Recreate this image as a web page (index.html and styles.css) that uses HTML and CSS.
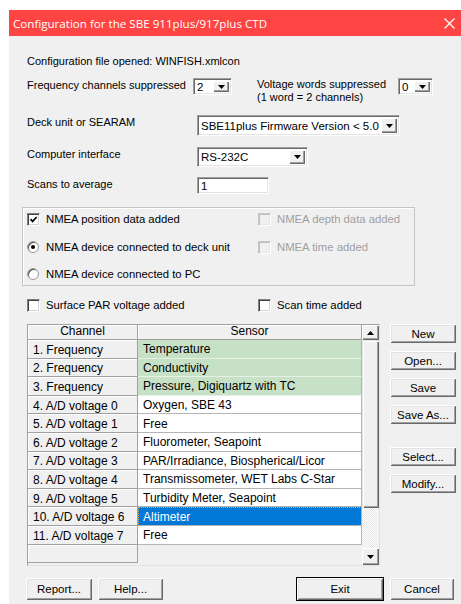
FILE: index.html
```html
<!DOCTYPE html>
<html>
<head>
<meta charset="utf-8">
<title>Configuration</title>
<link rel="stylesheet" href="styles.css">
</head>
<body>
<div class="window">
  <div class="titlebar">
    <span class="title">Configuration for the SBE 911plus/917plus CTD</span>
    <svg class="close" width="11" height="11" viewBox="0 0 11 11"><path d="M0.5 0.5 L10.5 10.5 M10.5 0.5 L0.5 10.5" stroke="#fff" stroke-width="1.2" fill="none"/></svg>
  </div>

  <div class="content">
    <div class="r-file">Configuration file opened: WINFISH.xmlcon</div>

    <div class="r-freq">
      <span class="lbl w-freq">Frequency channels suppressed</span>
      <div class="combo c-freq"><span class="val">2</span><span class="drop"><svg width="7" height="4" viewBox="0 0 7 4"><path d="M0 0 H7 L3.5 4 Z" fill="#000"/></svg></span></div>
      <span class="lbl two w-volt">Voltage words suppressed<br>(1 word = 2 channels)</span>
      <div class="combo c-volt"><span class="val">0</span><span class="drop"><svg width="7" height="4" viewBox="0 0 7 4"><path d="M0 0 H7 L3.5 4 Z" fill="#000"/></svg></span></div>
    </div>

    <div class="r-deck">
      <span class="lbl w-main">Deck unit or SEARAM</span>
      <div class="combo c-deck"><span class="val">SBE11plus Firmware Version &lt; 5.0</span><span class="drop"><svg width="7" height="4" viewBox="0 0 7 4"><path d="M0 0 H7 L3.5 4 Z" fill="#000"/></svg></span></div>
    </div>

    <div class="r-comp">
      <span class="lbl w-main">Computer interface</span>
      <div class="combo c-comp"><span class="val">RS-232C</span><span class="drop"><svg width="7" height="4" viewBox="0 0 7 4"><path d="M0 0 H7 L3.5 4 Z" fill="#000"/></svg></span></div>
    </div>

    <div class="r-scans">
      <span class="lbl w-main">Scans to average</span>
      <div class="edit"><span class="val">1</span></div>
    </div>

    <div class="group">
      <div class="g-row g-r1">
        <label class="opt col1"><span class="chk"><svg width="9" height="9" viewBox="0 0 9 9"><path d="M1.5 4.2 L3.6 6.4 L7.6 2" stroke="#000" stroke-width="1.7" fill="none"/></svg></span>NMEA position data added</label>
        <label class="opt off"><span class="chk"></span>NMEA depth data added</label>
      </div>
      <div class="g-row g-r2">
        <label class="opt col1"><span class="rad on"></span>NMEA device connected to deck unit</label>
        <label class="opt off"><span class="chk"></span>NMEA time added</label>
      </div>
      <div class="g-row g-r3">
        <label class="opt col1"><span class="rad"></span>NMEA device connected to PC</label>
      </div>
    </div>

    <div class="r-extra">
      <label class="opt col1"><span class="chk"></span>Surface PAR voltage added</label>
      <label class="opt"><span class="chk"></span>Scan time added</label>
    </div>

    <div class="main">
      <div class="grid">
        <div class="cells">
          <div class="hrow"><div class="hc ch">Channel</div><div class="hc sn">Sensor</div></div>
          <div class="trow"><div class="cc">1. Frequency</div><div class="sc green">Temperature</div></div>
          <div class="trow"><div class="cc">2. Frequency</div><div class="sc green">Conductivity</div></div>
          <div class="trow"><div class="cc">3. Frequency</div><div class="sc green">Pressure, Digiquartz with TC</div></div>
          <div class="trow"><div class="cc">4. A/D voltage 0</div><div class="sc">Oxygen, SBE 43</div></div>
          <div class="trow"><div class="cc">5. A/D voltage 1</div><div class="sc">Free</div></div>
          <div class="trow"><div class="cc">6. A/D voltage 2</div><div class="sc">Fluorometer, Seapoint</div></div>
          <div class="trow"><div class="cc">7. A/D voltage 3</div><div class="sc">PAR/Irradiance, Biospherical/Licor</div></div>
          <div class="trow"><div class="cc">8. A/D voltage 4</div><div class="sc">Transmissometer, WET Labs C-Star</div></div>
          <div class="trow"><div class="cc">9. A/D voltage 5</div><div class="sc">Turbidity Meter, Seapoint</div></div>
          <div class="trow"><div class="cc">10. A/D voltage 6</div><div class="sc sel">Altimeter</div></div>
          <div class="trow"><div class="cc">11. A/D voltage 7</div><div class="sc">Free</div></div>
          <div class="trow"><div class="cc"></div><div class="sc blank"></div></div>
        </div>
        <div class="vscroll">
          <div class="sbtn up"><svg width="7" height="4" viewBox="0 0 7 4"><path d="M0 4 H7 L3.5 0 Z" fill="#000"/></svg></div>
          <div class="thumb"></div>
          <div class="track"></div>
          <div class="sbtn down"><svg width="7" height="4" viewBox="0 0 7 4"><path d="M0 0 H7 L3.5 4 Z" fill="#000"/></svg></div>
        </div>
      </div>

      <div class="side">
        <button class="btn">New</button>
        <button class="btn">Open...</button>
        <button class="btn">Save</button>
        <button class="btn">Save As...</button>
        <button class="btn gap">Select...</button>
        <button class="btn">Modify...</button>
      </div>
    </div>

    <div class="footer">
      <button class="btn b-report">Report...</button>
      <button class="btn b-help">Help...</button>
      <span class="spacer"></span>
      <button class="btn b-exit">Exit</button>
      <button class="btn b-cancel">Cancel</button>
    </div>
  </div>
</div>
</body>
</html>
```
FILE: styles.css
```css
* { box-sizing: border-box; }

body {
  margin: 0;
  background: #fff;
  font-family: "Liberation Sans", Arial, sans-serif;
  font-size: 11px;
  color: #000;
}

.window {
  margin: 10px 0 0 9px;
  width: 452px;
  height: 594px;
  background: #f0f0f0;
  display: flex;
  flex-direction: column;
}

/* title bar */
.titlebar {
  height: 26px;
  flex: none;
  background: #ff4444;
  color: #fff;
  display: flex;
  align-items: center;
  justify-content: space-between;
  padding: 0 6px 0 4px;
  font-family: "Open Sans", "Noto Sans", sans-serif;
  font-size: 11.6px;
}
.close { display: block; }

.content {
  padding-left: 18px;
  display: flex;
  flex-direction: column;
}

.lbl { line-height: 14px; flex: none; }
.lbl.two { line-height: 13px; }

.r-file { height: 42px; padding-top: 18px; line-height: 14px; }

.r-freq { height: 37px; display: flex; align-items: flex-start; }
.w-freq { width: 166px; }
.w-volt { width: 141px; margin-left: 25px; }
.w-main { width: 170px; }

.r-deck { height: 32px; display: flex; align-items: flex-start; }
.r-comp { height: 30px; display: flex; align-items: flex-start; }
.r-scans { height: 30px; display: flex; align-items: flex-start; }

/* sunken field */
.combo, .edit {
  display: flex;
  align-items: stretch;
  background: #fff;
  border-top: 1px solid #a0a0a0;
  border-left: 1px solid #a0a0a0;
  border-right: 1px solid #fff;
  border-bottom: 1px solid #fff;
  box-shadow: inset 1px 1px #696969, inset -1px -1px #e3e3e3;
  padding: 2px;
  font-size: 11.5px;
}
.val {
  flex: 1;
  line-height: 12px;
  padding-left: 1px;
  display: flex;
  align-items: center;
  white-space: nowrap;
  overflow: hidden;
}
.drop {
  width: 16px;
  flex: none;
  background: #f0f0f0;
  box-shadow: inset 1px 1px #fff, inset -1px -1px #696969, inset -2px -2px #a0a0a0;
  display: flex;
  align-items: center;
  justify-content: center;
}
.drop svg { display: block; }

.c-freq { width: 39px; height: 17px; }
.c-volt { width: 35px; height: 17px; }
.c-deck { width: 203px; height: 21px; }
.c-comp { width: 111px; height: 20px; }
.edit { width: 72px; height: 17px; }

/* group box */
.group {
  margin-left: -5px;
  width: 393px;
  height: 79px;
  border: 1px solid #c4c4c4;
  box-shadow: inset 1px 1px #fff;
  padding: 4px 0 0 4px;
}
.g-row { display: flex; }
.g-r1 { height: 28px; }
.g-r2 { height: 27px; }
.g-r3 { height: 14px; }

.opt {
  display: flex;
  align-items: center;
  line-height: 14px;
  height: 14px;
  white-space: nowrap;
  font-size: 11.3px;
}
.col1 { width: 231px; }
.opt.off { color: #a0a0a0; }

.chk {
  width: 13px;
  height: 13px;
  flex: none;
  margin-right: 6px;
  background: #fff;
  border-top: 1px solid #808080;
  border-left: 1px solid #808080;
  border-right: 1px solid #fff;
  border-bottom: 1px solid #fff;
  box-shadow: inset 1px 1px #404040, inset -1px -1px #d4d4d4;
  display: flex;
  align-items: center;
  justify-content: center;
}
.chk svg { display: block; }
.off .chk {
  background: #f0f0f0;
  border-color: #c8c8c8 #fff #fff #c8c8c8;
  box-shadow: inset 1px 1px #bdbdbd, inset -1px -1px #e6e6e6;
}

.rad {
  width: 12px;
  height: 12px;
  flex: none;
  margin-right: 7px;
  border-radius: 50%;
  background: #fff;
  border: 1px solid #9a9a9a;
  box-shadow: inset 1px 1px #505050;
  position: relative;
}
.rad.on::after {
  content: "";
  position: absolute;
  left: 3px;
  top: 3px;
  width: 4px;
  height: 4px;
  border-radius: 50%;
  background: #000;
}

.r-extra {
  height: 38px;
  display: flex;
  align-items: flex-start;
  padding-top: 12px;
}

/* sensor table + side buttons */
.main {
  height: 242px;
  display: flex;
  align-items: flex-start;
}

.grid {
  width: 353px;
  height: 242px;
  display: flex;
  border: 1px solid #a0a0a0;
  border-right-color: #e3e3e3;
  border-bottom-color: #e3e3e3;
  background: #f0f0f0;
  font-size: 12px;
}
.cells { width: 334px; display: flex; flex-direction: column; }

.hrow { display: flex; height: 15px; flex: none; }
.hc {
  line-height: 13px;
  text-align: center;
  background: #f0f0f0;
  border-right: 1px solid #a0a0a0;
  border-bottom: 1px solid #a0a0a0;
  box-shadow: inset 1px 1px #fff;
}
.hc.ch { width: 110px; }
.hc.sn { flex: 1; }

.trow { display: flex; height: 18.6px; flex: none; }
.cc {
  width: 110px;
  flex: none;
  background: #f0f0f0;
  border-right: 1px solid #a0a0a0;
  border-bottom: 1px solid #a0a0a0;
  box-shadow: inset 1px 1px #fff;
  padding: 2px 0 0 5px;
  display: flex;
  align-items: center;
  white-space: nowrap;
}
.sc {
  flex: 1;
  background: #fff;
  border-bottom: 1px solid #b4b4b4;
  border-right: 1px solid #b4b4b4;
  padding: 1px 0 0 5px;
  display: flex;
  align-items: center;
  white-space: nowrap;
}
.sc.green { background: #c7e1c7; border-bottom-color: #e6f1e6; }
.sc.sel {
  background: #0078d7;
  color: #fff;
  outline: 1px dotted #f3a23c;
  outline-offset: -1px;
}
.sc.blank { background: #f0f0f0; border: 0; }

.vscroll {
  width: 17px;
  flex: none;
  display: flex;
  flex-direction: column;
}
.sbtn {
  background: #f0f0f0;
  box-shadow: inset 1px 1px #fff, inset -1px -1px #696969, inset -2px -2px #a0a0a0;
  display: flex;
  align-items: center;
  justify-content: center;
  flex: none;
}
.sbtn svg { display: block; }
.sbtn.up { height: 15px; }
.sbtn.down { height: 17px; }
.thumb {
  height: 168px;
  flex: none;
  background: #f0f0f0;
  box-shadow: inset 1px 1px #e3e3e3, inset 2px 2px #fff, inset -1px -1px #696969, inset -2px -2px #a0a0a0;
}
.track {
  flex: 1;
  background: repeating-conic-gradient(#fff 0 25%, #e6e6e6 0 50%) 0 0 / 2px 2px;
}

.side {
  margin-left: 10px;
  display: flex;
  flex-direction: column;
  gap: 8px;
}
.btn {
  font-family: "Liberation Sans", Arial, sans-serif;
  font-size: 11.5px;
  color: #000;
  background: #f0f0f0;
  border: 0;
  margin: 0;
  padding: 0;
  height: 19px;
  box-shadow: inset 1px 1px #fff, inset -1px -1px #696969, inset 2px 2px #e3e3e3, inset -2px -2px #a0a0a0;
  line-height: 14px;
}
.side .btn { width: 66px; }
.side .btn.gap { margin-top: 15px; }

.footer {
  margin-top: 12px;
  display: flex;
  align-items: center;
  width: 427px;
}
.footer .btn { height: 22px; }
.b-report { width: 66px; margin-left: -1px; }
.b-help { width: 65px; margin-left: 6px; }
.spacer { flex: 1; }
.b-exit {
  width: 86px;
  box-shadow: 0 0 0 1px #000, inset 1px 1px #fff, inset -1px -1px #696969, inset 2px 2px #e3e3e3, inset -2px -2px #a0a0a0;
}
.b-cancel { width: 64px; margin-left: 7px; }
```
